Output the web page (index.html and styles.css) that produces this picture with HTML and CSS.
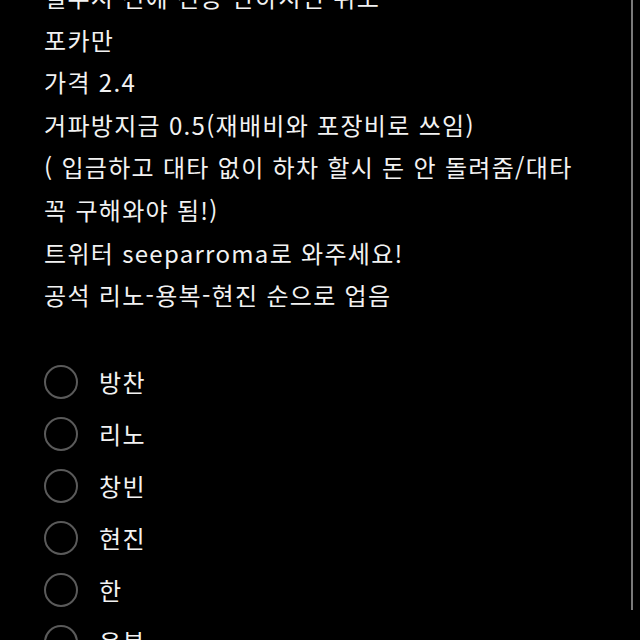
FILE: index.html
```html
<!DOCTYPE html>
<html lang="ko">
<head>
    <meta charset="UTF-8">
    <title>포카 분철</title>
    <link rel="stylesheet" href="styles.css">
</head>
<body>
    <div id="post">
        <div class="desc">
            <p>열두시 전에 전송 안하시면 취소</p>
            <p>포카만</p>
            <p>가격 2.4</p>
            <p>거파방지금 0.5(재배비와 포장비로 쓰임)</p>
            <p>( 입금하고 대타 없이 하차 할시 돈 안 돌려줌/대타 꼭 구해와야 됨!)</p>
            <p>트위터 seeparroma로 와주세요!</p>
            <p>공석 리노-용복-현진 순으로 업음</p>
        </div>
        <form class="options">
            <label class="option"><input type="radio" name="member"><span class="dot"></span>방찬</label>
            <label class="option"><input type="radio" name="member"><span class="dot"></span>리노</label>
            <label class="option"><input type="radio" name="member"><span class="dot"></span>창빈</label>
            <label class="option"><input type="radio" name="member"><span class="dot"></span>현진</label>
            <label class="option"><input type="radio" name="member"><span class="dot"></span>한</label>
            <label class="option"><input type="radio" name="member"><span class="dot"></span>용복</label>
        </form>
    </div>
    <div class="scrollbar"></div>
</body>
</html>
```

FILE: styles.css
```css
html, body {
    margin: 0;
    height: 100%;
    overflow: hidden;
    background-color: #000000;
}

body {
    font-family: "Noto Sans CJK KR", "Noto Sans", sans-serif;
    color: #f2f2f2;
    letter-spacing: 1.3px;
}

#post {
    margin-top: -24px;
    padding-left: 44px;
    width: 540px;
}

.desc p {
    margin: 0;
    font-size: 24px;
    line-height: 42.6px;
}

.options {
    display: flex;
    flex-direction: column;
    gap: 18px;
    margin-top: 48px;
}

.option {
    display: flex;
    align-items: center;
    gap: 21px;
    font-size: 24px;
    height: 34px;
}

.option input {
    display: none;
}

.option .dot {
    width: 30px;
    height: 30px;
    border: 2px solid #5a5a5a;
    border-radius: 50%;
    flex-shrink: 0;
}

.scrollbar {
    position: fixed;
    top: 0;
    left: 631px;
    width: 2px;
    height: 610px;
    background-color: #7a7a7a;
}
```
